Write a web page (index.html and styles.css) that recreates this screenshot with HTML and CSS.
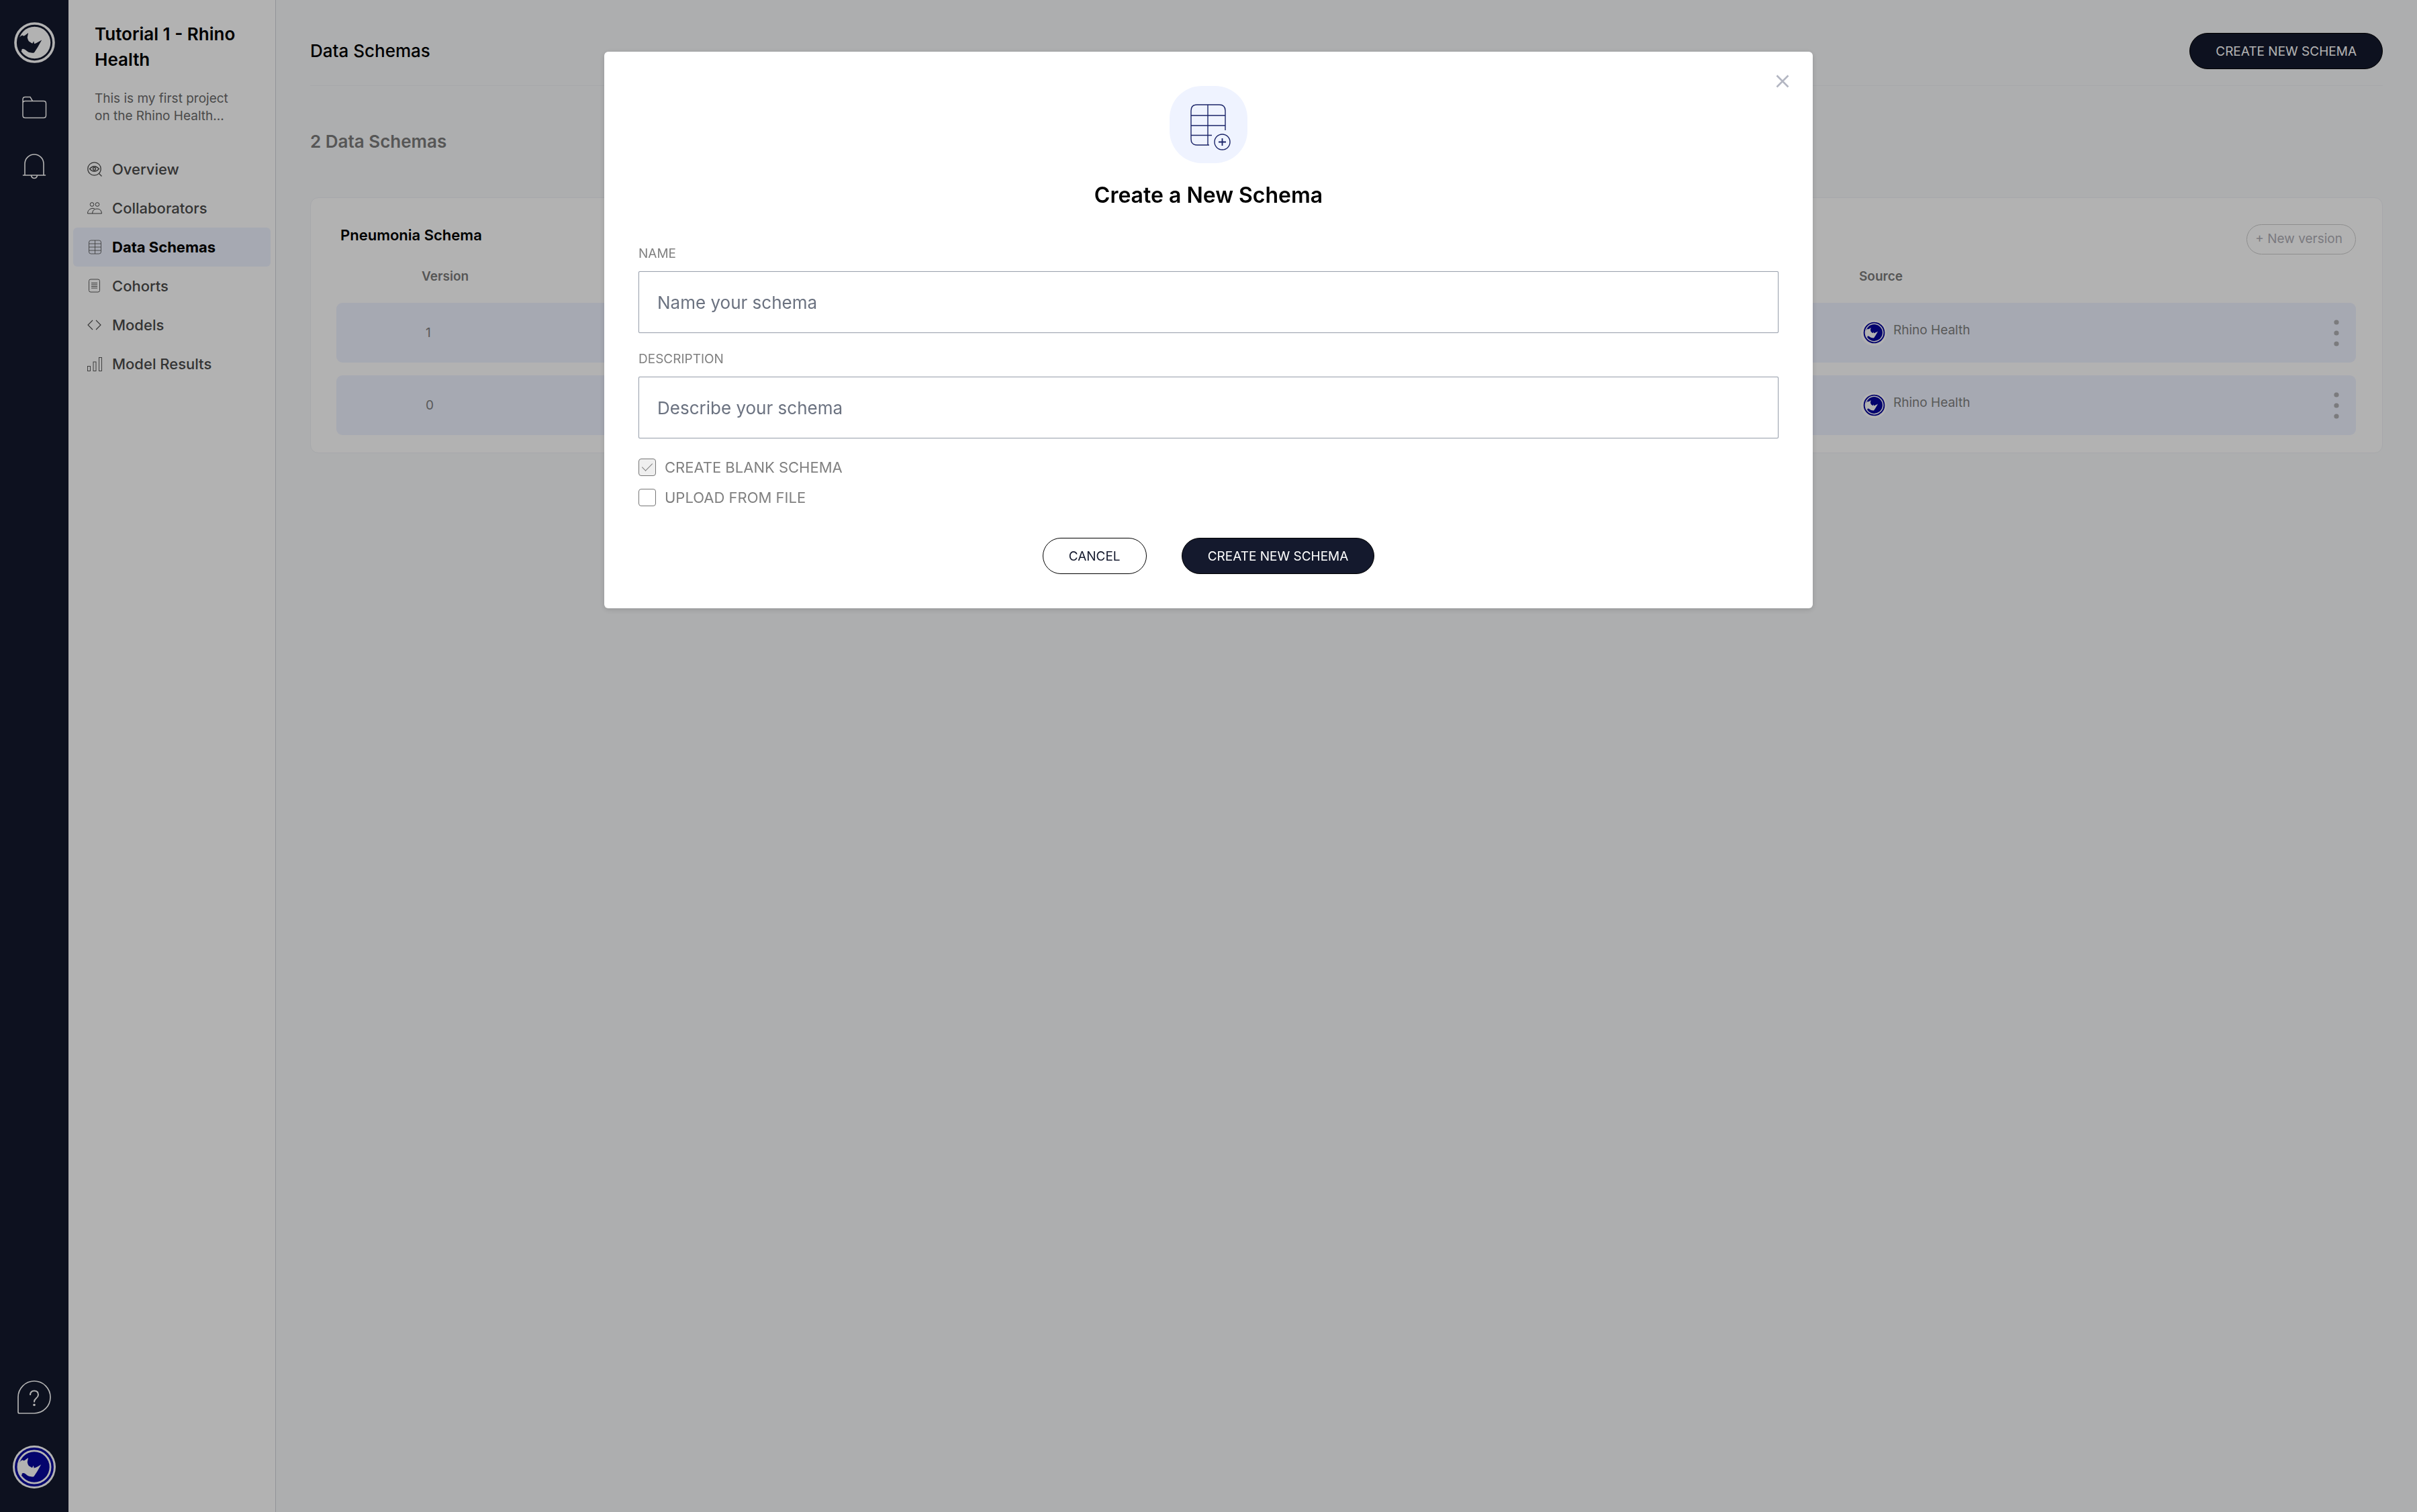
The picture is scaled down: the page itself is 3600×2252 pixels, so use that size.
FILE: index.html
```html
<!DOCTYPE html>
<html lang="en">

<head>
    <meta charset="utf-8">
    <title>Data Schemas</title>
    <link rel="stylesheet" href="styles.css">
</head>

<body>

    <!-- rhino mark, used in the rail and in the table -->
    <svg class="sprite" width="0" height="0" aria-hidden="true">
        <symbol id="rhino" viewBox="0 0 200 200">
            <circle cx="100" cy="100" r="85" fill="none" stroke="currentColor" stroke-width="11" />
            <circle cx="100" cy="100" r="71" fill="currentColor" />
            <path class="rhino-head" d="M26 100C26 84 32 72 46 67C50 72 56 70 60 66L72 57L68 77C70 88 74 96 81 98C86 103 90 103 91 103L96 93L99 105C110 102 120 95 132 88L114 120L99 143C98 146 90 146 76 143C66 140 60 129 50 128C44 127 41 132 43 136L38 140C30 130 26 115 26 100Z" />
        </symbol>
    </svg>

    <div class="app">
        <aside class="rail">
            <a class="rail-logo" href="#" aria-label="Home"><svg width="67" height="67"><use href="#rhino" /></svg></a>
            <a class="rail-link" href="#" aria-label="Projects">
                <svg width="38" height="34" viewBox="0 0 38 34" fill="none" stroke="currentColor" stroke-width="1.5">
                    <path d="M2 10V5Q2 1.500 5.500 1.500H13L16.500 7.500H33Q36.500 7.500 36.500 11V29Q36.500 32.500 33 32.500H5.500Q2 32.500 2 29V11Q2 7.500 5.500 7.500H16.500" />
                </svg>
            </a>
            <a class="rail-link" href="#" aria-label="Notifications">
                <svg width="38" height="40" viewBox="0 0 38 40" fill="none" stroke="currentColor" stroke-width="1.600" stroke-linecap="round">
                    <path d="M2.500 33H35.500M5 33V16A14 14 0 0 1 33 16V33M14.500 33.500Q15.500 37.500 19 37.500T23.500 33.500" />
                </svg>
            </a>
            <div class="rail-bottom">
                <a class="rail-link" href="#" aria-label="Help">
                    <svg width="50" height="50" viewBox="0 0 50 50" fill="none" stroke="currentColor" stroke-width="1.700">
                        <path d="M1 25A24 24 0 1 1 25 49H3Q1 49 1 47Z" />
                        <path d="M19 22Q19 15.500 25 15.500T31 21.500Q31 24 28 26.500T25 31.500V32.500" stroke-width="2" />
                        <circle cx="25" cy="36.500" r="1.800" fill="currentColor" stroke="none" />
                    </svg>
                </a>
                <a class="rail-avatar" href="#" aria-label="Account"><svg width="64" height="64"><use href="#rhino" /></svg></a>
            </div>
        </aside>

        <div class="panel">
            <h2 class="project-name">Tutorial 1 - Rhino Health</h2>
            <p class="project-text">This is my first project on the Rhino Health...</p>
            <nav class="menu">
                <a class="menu-item" href="#">
                    <svg width="22" height="22" viewBox="0 0 22 22" fill="none" stroke="currentColor" stroke-width="1.300">
                        <circle cx="10.500" cy="10.500" r="9.700" />
                        <path d="M17 17L21.500 21.500M3.500 10.500Q10.500 3 17.500 10.500Q10.500 18 3.500 10.500Z" />
                        <circle cx="10.500" cy="10.500" r="2" />
                    </svg>
                    Overview
                </a>
                <a class="menu-item" href="#">
                    <svg width="22" height="22" viewBox="0 0 22 22" fill="none" stroke="currentColor" stroke-width="1">
                        <circle cx="7" cy="5.500" r="2.800" />
                        <circle cx="15" cy="5.500" r="2.800" />
                        <path d="M11 12Q8 10.500 5 12Q0.500 14 0.500 19H21.500Q21 12 14.500 12T7.500 19" />
                    </svg>
                    Collaborators
                </a>
                <a class="menu-item active" href="#">
                    <svg width="22" height="22" viewBox="0 0 22 22" fill="none" stroke="currentColor" stroke-width="0.800">
                        <rect x="2.500" y="1" width="18" height="20" rx="3" />
                        <path d="M11.500 1V21M2.500 6H20.500M2.500 11H20.500M2.500 16H20.500" />
                    </svg>
                    Data Schemas
                </a>
                <a class="menu-item" href="#">
                    <svg width="22" height="22" viewBox="0 0 22 22" fill="none" stroke="currentColor" stroke-width="0.900">
                        <rect x="2.500" y="1" width="16" height="19" rx="2.500" />
                        <path d="M6 6.500H15M6 9H15M6 11.500H15M6 14H15" />
                    </svg>
                    Cohorts
                </a>
                <a class="menu-item" href="#">
                    <svg width="22" height="22" viewBox="0 0 22 22" fill="none" stroke="currentColor" stroke-width="1.100">
                        <path d="M8 4L1 11L8 18M13 4L20 11L13 18" />
                    </svg>
                    Models
                </a>
                <a class="menu-item" href="#">
                    <svg width="22" height="22" viewBox="0 0 22 22" fill="none" stroke="currentColor" stroke-width="0.900">
                        <rect x="0.500" y="14.500" width="4" height="7" />
                        <rect x="9" y="8" width="4" height="13.500" />
                        <rect x="17.500" y="1.500" width="4" height="20" />
                    </svg>
                    Model Results
                </a>
            </nav>
        </div>

        <main class="content">
            <header class="page-header">
                <h1>Data Schemas</h1>
                <button class="btn btn-dark" type="button">CREATE NEW SCHEMA</button>
            </header>

            <h3 class="count">2 Data Schemas</h3>

            <section class="card">
                <div class="card-header">
                    <h4>Pneumonia Schema</h4>
                    <button class="btn-version" type="button">+ New version</button>
                </div>
                <table class="versions">
                    <colgroup>
                        <col class="col-version">
                        <col class="col-blank">
                        <col class="col-source">
                        <col class="col-actions">
                    </colgroup>
                    <thead>
                        <tr>
                            <th>Version</th>
                            <th></th>
                            <th class="source-head">Source</th>
                            <th></th>
                        </tr>
                    </thead>
                    <tbody>
                        <tr>
                            <td>1</td>
                            <td></td>
                            <td>
                                <div class="source">
                                    <span class="source-logo"><svg width="35" height="35"><use href="#rhino" /></svg></span>
                                    <span class="source-name">Rhino Health</span>
                                </div>
                            </td>
                            <td>
                                <button class="dots" type="button" aria-label="More">
                                    <svg width="8" height="40" viewBox="0 0 8 40" fill="currentColor"><circle cx="4" cy="4" r="3.600" /><circle cx="4" cy="20" r="3.600" /><circle cx="4" cy="36" r="3.600" /></svg>
                                </button>
                            </td>
                        </tr>
                        <tr>
                            <td>0</td>
                            <td></td>
                            <td>
                                <div class="source">
                                    <span class="source-logo"><svg width="35" height="35"><use href="#rhino" /></svg></span>
                                    <span class="source-name">Rhino Health</span>
                                </div>
                            </td>
                            <td>
                                <button class="dots" type="button" aria-label="More">
                                    <svg width="8" height="40" viewBox="0 0 8 40" fill="currentColor"><circle cx="4" cy="4" r="3.600" /><circle cx="4" cy="20" r="3.600" /><circle cx="4" cy="36" r="3.600" /></svg>
                                </button>
                            </td>
                        </tr>
                    </tbody>
                </table>
            </section>
        </main>
    </div>

    <div class="overlay">
        <form class="modal" role="dialog" aria-labelledby="modal-title">
            <button class="modal-close" type="button" aria-label="Close">
                <svg width="20" height="20" viewBox="0 0 20 20" stroke="currentColor" stroke-width="2.600"><path d="M1.500 1.500L18.500 18.500M18.500 1.500L1.500 18.500" /></svg>
            </button>
            <div class="modal-icon">
                <svg width="66" height="78" viewBox="-6 -8 66 78" fill="none" stroke="currentColor" stroke-width="1.400">
                    <path d="M28 61H10Q1 61 1 52V10Q1 1 10 1H43Q52 1 52 10V39M26 1V61M1 17H52M1 32H52M1 46.500H32" />
                    <circle cx="47.500" cy="56.500" r="11.500" />
                    <path d="M47.500 51V62M42 56.500H53" stroke-width="1.800" />
                </svg>
            </div>
            <h2 class="modal-title" id="modal-title">Create a New Schema</h2>

            <label class="field-label" for="schema-name">NAME</label>
            <input class="field" type="text" id="schema-name" placeholder="Name your schema">
            <label class="field-label" for="schema-description">DESCRIPTION</label>
            <input class="field" type="text" id="schema-description" placeholder="Describe your schema">

            <div class="checks">
                <label class="check" for="blank"><input type="checkbox" id="blank" checked disabled>CREATE BLANK SCHEMA</label>
                <label class="check" for="upload"><input type="checkbox" id="upload">UPLOAD FROM FILE</label>
            </div>

            <div class="modal-buttons">
                <button class="btn btn-light" type="button">CANCEL</button>
                <button class="btn btn-dark" type="submit">CREATE NEW SCHEMA</button>
            </div>
        </form>
    </div>

</body>

</html>
```
FILE: styles.css
```css
* {
    box-sizing: border-box;
}

body {
    margin: 0;
    font-family: Inter, "Liberation Sans", sans-serif;
    font-size: 19px;
    line-height: 26px;
    color: #000;
    background-color: #f8f9fb;
}

h1, h2, h3, h4, p {
    margin: 0;
}

a {
    color: inherit;
    text-decoration: none;
}

button {
    font-family: inherit;
    font-size: 19px;
    cursor: pointer;
}

svg {
    display: block;
    flex-shrink: 0;
}

.sprite {
    position: absolute;
}

.rhino-head {
    fill: var(--head);
}

.app {
    display: flex;
    min-height: 100vh;
}

/* left rail */

.rail {
    width: 102px;
    flex-shrink: 0;
    display: flex;
    flex-direction: column;
    align-items: center;
    padding: 30px 0 35px;
    background-color: #14192d;
    color: #fff;
}

.rail-logo {
    --head: #14192d;
    margin-bottom: 46px;
}

.rail-link {
    margin-bottom: 51px;
}

.rail-bottom {
    margin-top: auto;
    display: flex;
    flex-direction: column;
    align-items: center;
}

.rail-bottom .rail-link {
    margin-bottom: 47px;
}

.rail-avatar {
    --head: #fff;
    background-color: #fff;
    border-radius: 50%;
    color: #06069c;
}

/* project panel */

.panel {
    width: 309px;
    flex-shrink: 0;
    padding: 32px 7px;
    background-color: #fff;
    border-right: 1px solid #d1d5db;
}

.project-name {
    padding: 0 32px;
    font-size: 26px;
    font-weight: 600;
    line-height: 38px;
}

.project-text {
    margin-top: 26px;
    padding: 0 52px 0 32px;
    color: #6b6b6b;
}

.menu {
    margin-top: 37px;
}

.menu-item {
    display: flex;
    align-items: center;
    gap: 15px;
    height: 58px;
    padding-left: 21px;
    border-radius: 6px;
    font-size: 22px;
    font-weight: 500;
    color: #4b4b4b;
}

.menu-item.active {
    background-color: #eef2ff;
    font-weight: 700;
    color: #000;
}

.menu-item.active svg {
    color: #4b4b4b;
}

/* content */

.content {
    flex: 1;
    padding: 0 51px;
}

.page-header {
    display: flex;
    justify-content: space-between;
    align-items: flex-start;
    height: 128px;
    padding-top: 49px;
    border-bottom: 1px solid #eff1f5;
}

h1 {
    font-size: 26px;
    font-weight: 500;
    line-height: 54px;
}

.count {
    margin-top: 64px;
    font-size: 26px;
    font-weight: 600;
    line-height: 38px;
    color: #7c7c7c;
}

.btn {
    height: 54px;
    padding: 0 38px;
    border: 1px solid #000;
    border-radius: 27px;
}

.btn-dark {
    background-color: #14192d;
    color: #fff;
}

.btn-light {
    background-color: #fff;
    color: #14192d;
}

.card {
    margin-top: 64px;
    padding: 39px 39px 7px 38px;
    background-color: #fff;
    border: 1px solid #eff1f5;
    border-radius: 12px;
}

.card-header {
    display: flex;
    justify-content: space-between;
    height: 45px;
}

.card-header h4 {
    padding-left: 6px;
    font-size: 22px;
    font-weight: 600;
    line-height: 32px;
}

.btn-version {
    padding: 0 19px 2px 12px;
    background-color: #fff;
    border: 1px solid #ccc;
    border-radius: 23px;
    color: #b0afb7;
}

.versions {
    width: 100%;
    table-layout: fixed;
    border-collapse: separate;
    border-spacing: 0 19px;
}

.col-version {
    width: 25%;
}

.col-blank {
    width: 50%;
}

.col-source {
    width: 20%;
}

.col-actions {
    width: 5%;
}

.versions th {
    height: 34px;
    padding: 0 0 6px 127px;
    text-align: left;
    font-weight: 600;
    color: #7c7c7c;
}

.versions th.source-head {
    padding-left: 12px;
}

.versions td {
    height: 89px;
    padding: 0 0 0 15px;
    background-color: #eef2ff;
    color: #808080;
}

.versions td:first-child {
    padding-left: 133px;
    border-radius: 9px 0 0 9px;
}

.versions td:last-child {
    padding: 0 25px 0 0;
    border-radius: 0 9px 9px 0;
}

.source {
    display: flex;
    align-items: center;
    gap: 10px;
}

.source-logo {
    --head: #fff;
    display: flex;
    align-items: center;
    justify-content: center;
    width: 38px;
    height: 38px;
    background-color: #fff;
    border-radius: 50%;
    color: #06069c;
}

.source-name {
    padding-bottom: 8px;
}

.dots {
    display: block;
    margin-left: auto;
    padding: 0;
    background: none;
    border: none;
    color: #b0b0b3;
}

/* modal */

.overlay {
    position: fixed;
    inset: 0;
    display: flex;
    justify-content: center;
    align-items: flex-start;
    padding-top: 77px;
    background-color: rgba(0, 0, 0, 0.3);
}

.modal {
    position: relative;
    display: flex;
    flex-direction: column;
    width: 50%;
    padding: 51px;
    background-color: #fff;
    border-radius: 6px;
    box-shadow: 0 2px 8px rgba(0, 0, 0, 0.15);
}

.modal-close {
    position: absolute;
    top: 34px;
    right: 35px;
    padding: 0;
    background: none;
    border: none;
    color: #b3b6c2;
}

.modal-icon {
    align-self: center;
    display: flex;
    align-items: center;
    justify-content: center;
    width: 116px;
    height: 115px;
    background-color: #eff3ff;
    border-radius: 48px;
    color: #1b2468;
}

.modal-title {
    margin: 28px 0;
    font-size: 32px;
    font-weight: 600;
    line-height: 40px;
    text-align: center;
}

.field-label {
    margin: 26px 0 13px;
    color: #808080;
}

.field {
    width: 100%;
    height: 92px;
    padding: 0 27px;
    border: 1px solid #9ca3af;
    border-radius: 2px;
    box-shadow: 0 0 1px #9ca3af;
    font-family: inherit;
    font-size: 26px;
}

.field::placeholder {
    color: #6b7280;
}

.checks {
    display: flex;
    flex-direction: column;
    align-items: flex-start;
    gap: 19px;
    margin-top: 30px;
}

.check {
    display: flex;
    align-items: center;
    gap: 13px;
    font-size: 22px;
    color: #808080;
}

.check input {
    appearance: none;
    display: grid;
    place-content: center;
    width: 26px;
    height: 26px;
    margin: 0;
    background-color: #fff;
    border: 1px solid #767676;
    border-radius: 4px;
}

.check input:disabled {
    background-color: #efefef;
}

.check input:checked::after {
    content: "";
    width: 7px;
    height: 14px;
    margin-bottom: 5px;
    border: solid #808080;
    border-width: 0 1px 1px 0;
    transform: rotate(45deg);
}

.modal-buttons {
    display: flex;
    justify-content: center;
    gap: 52px;
    margin-top: 47px;
}
```
